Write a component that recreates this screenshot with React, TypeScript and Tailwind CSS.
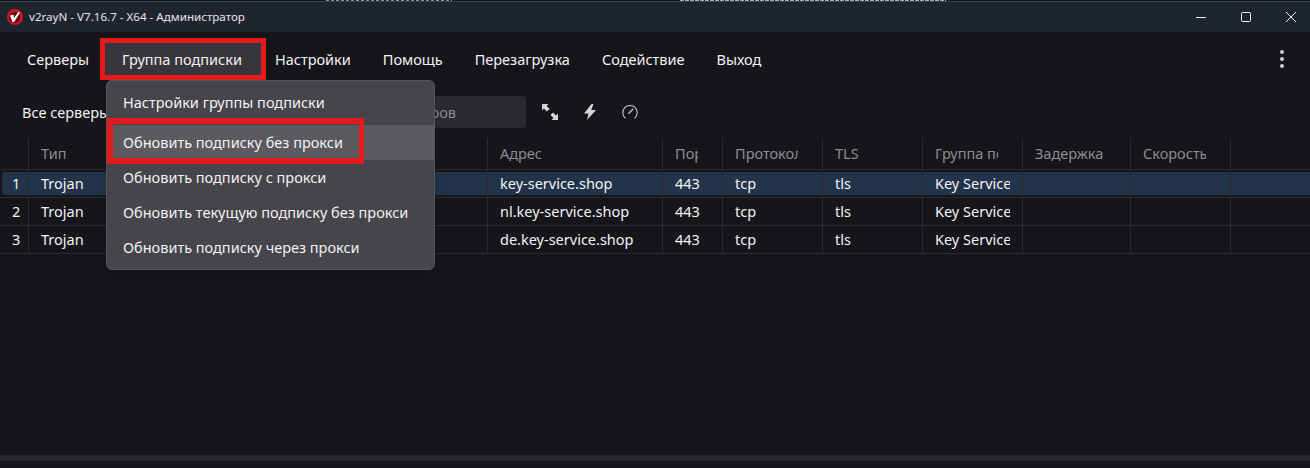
// App.tsx
import React from 'react';
import { EllipsisVertical } from 'lucide-react';

const menuItems = ['Серверы', 'Группа подписки', 'Настройки', 'Помощь', 'Перезагрузка', 'Содействие', 'Выход'];

const dropdownItems = [
  'Настройки группы подписки',
  'Обновить подписку без прокси',
  'Обновить подписку с прокси',
  'Обновить текущую подписку без прокси',
  'Обновить подписку через прокси',
];

const columns = [
  { label: '', width: 'w-[29px]' },
  { label: 'Тип', width: 'w-[100px]' },
  { label: '', width: 'w-[359px]' },
  { label: 'Адрес', width: 'w-[175px]' },
  { label: 'Порт', width: 'w-[60px]' },
  { label: 'Протокол', width: 'w-[100px]' },
  { label: 'TLS', width: 'w-[100px]' },
  { label: 'Группа подписки', width: 'w-[100px]' },
  { label: 'Задержка', width: 'w-[108px]' },
  { label: 'Скорость', width: 'w-[100px]' },
];

const rows = [
  ['1', 'Trojan', '', 'key-service.shop', '443', 'tcp', 'tls', 'Key Service', '', ''],
  ['2', 'Trojan', '', 'nl.key-service.shop', '443', 'tcp', 'tls', 'Key Service', '', ''],
  ['3', 'Trojan', '', 'de.key-service.shop', '443', 'tcp', 'tls', 'Key Service', '', ''],
];

const Logo = () => (
  <svg width="16" height="16" viewBox="0 0 16 16">
    <circle cx="8" cy="8" r="8" fill="#d3141b" />
    <circle cx="7.5" cy="8.5" r="5.5" fill="#5a0a0d" />
    <path d="M3 6.5 L6.6 5.6 L7 9 L11.5 2.8 L13 3.6 L7.2 13 L5.4 13 Z" fill="#fff" />
  </svg>
);

const App: React.FC = () => {
  return (
    <div className="w-[1310px] h-[468px] overflow-hidden bg-[#15151a] text-[#f2f2f2] font-['Noto_Sans',sans-serif] flex flex-col relative">
      {/* sliver of the window behind */}
      <div className="h-[1px] shrink-0 flex bg-[#14151a]">
        <div className="ml-[326px] w-[126px] bg-[repeating-linear-gradient(90deg,#8a8f9a_0_3px,transparent_3px_5px)]" />
        <div className="ml-[228px] w-[266px] bg-[repeating-linear-gradient(90deg,#a9adb6_0_4px,transparent_4px_5px)]" />
      </div>

      {/* title bar */}
      <div className="h-[31px] shrink-0 bg-[#1e252e] border-t border-[#3a4150] flex items-center pl-[7px] pr-[14px] text-[11.6px] text-[#e6e6e6]">
        <Logo />
        <span className="ml-[6px] flex-1">v2rayN - V7.16.7 - X64 - Администратор</span>
        <div className="flex items-center gap-[35px]">
          <svg width="10" height="10" viewBox="0 0 10 10" stroke="#f2f2f2" fill="none">
            <path d="M0 5.5H10" />
          </svg>
          <svg width="10" height="10" viewBox="0 0 10 10" stroke="#f2f2f2" fill="none">
            <rect x="0.5" y="0.5" width="9" height="9" rx="1" />
          </svg>
          <svg width="10" height="10" viewBox="0 0 10 10" stroke="#f2f2f2" fill="none">
            <path d="M0 0L10 10M10 0L0 10" />
          </svg>
        </div>
      </div>

      {/* menu */}
      <div className="h-[48px] mt-[3px] shrink-0 flex items-center pl-[11px] pr-[16px] text-[14.5px]">
        {menuItems.map((item) => (
          <div
            key={item}
            className={
              item === 'Группа подписки'
                ? 'h-[32px] pt-[2px] pl-[17px] pr-[19px] mr-[-2px] flex items-center bg-[#36363c] outline-[5px] outline-[#e21b1f]'
                : 'h-[32px] pt-[2px] px-[16px] flex items-center'
            }
          >
            {item}
          </div>
        ))}
        <div className="ml-auto flex items-center text-[#cfcfcf]"><EllipsisVertical size={24} /></div>
      </div>

      {/* toolbar */}
      <div className="h-[34px] mt-[12px] shrink-0 flex items-center pl-[22px] text-[14.5px]">
        <span className="w-[85px] pt-[2px] overflow-hidden whitespace-nowrap">Все серверы</span>
        <div className="ml-[2px] w-[417px] h-[32px] pt-[2px] bg-[#2a2a30] rounded-[4px] flex items-center justify-end pr-[70px] text-[#8b8b8f]">
          серверов
        </div>
        <svg className="ml-[16px]" width="16" height="16" viewBox="0 0 16 16" fill="#d5d5d5">
          <path d="M0 0h6.5L4.6 1.9 7.6 4.9 4.9 7.6 1.9 4.6 0 6.5zM16 16H9.5l1.9-1.9-3-3 2.7-2.7 3 3L16 9.5z" />
        </svg>
        <svg className="ml-[26px]" width="12" height="16" viewBox="0 0 12 16" fill="#d5d5d5">
          <path d="M7.5 0L0 9.5h4.5L3 16l9-10H7.2L9.5 0z" />
        </svg>
        <svg className="ml-[26px]" width="16" height="16" viewBox="0 0 16 16" fill="none" stroke="#c8c8c8" strokeWidth="1.1" strokeLinecap="round">
          <path d="M3.2 14A7.2 7.2 0 1 1 12.8 14" />
          <path d="M6.9 9.2L10.8 5.2" strokeWidth="1.4" />
        </svg>
      </div>

      {/* server table */}
      <div className="mt-[9px] text-[14.5px]">
        <div className="flex h-[32px] border-b border-[#2a2a2f]">
          {columns.map((col, i) => (
            <div key={i} className={`${col.width} shrink-0 h-full border-r border-[#2a2a2f] ${i === 0 ? '' : 'pl-[12px] pr-[24px]'} flex items-center text-[#8c8c90]`}>
              {col.label && <span className="block w-full overflow-hidden whitespace-nowrap">{col.label}</span>}
            </div>
          ))}
          <div className="flex-1" />
        </div>
        {rows.map((row, r) => (
          <div key={r} className="flex h-[28px] border-b border-[#2a2a2f] relative">
            {r === 0 && <div className="absolute left-[2px] right-0 top-[2px] h-[23px] bg-[#23344a] rounded-l-[3px]" />}
            {row.map((cell, i) => (
              <div key={i} className={`${columns[i].width} relative shrink-0 h-full border-r border-[#2a2a2f] ${i === 0 ? 'pl-[12px]' : 'pl-[12px] pr-[12px]'} flex items-center`}>
                {cell && <span className="block w-full overflow-hidden whitespace-nowrap">{cell}</span>}
              </div>
            ))}
          </div>
        ))}
      </div>

      {/* dropdown */}
      <div className="absolute left-[106px] top-[80px] w-[329px] h-[190px] bg-[#45454b] border border-[#55555b] rounded-[6px] shadow-lg text-[14.5px] py-[4px] flex flex-col">
        {dropdownItems.map((item, i) => (
          <div key={item} className={i === 1 ? 'h-[35px] mt-[5px] flex items-center pl-[16px] bg-[#5a5a60] relative' : 'h-[35px] flex items-center pl-[16px]'}>
            {item}
            {i === 1 && <div className="absolute left-0 top-[-7px] bottom-[-4px] w-[257px] border-[6px] border-r-[5px] border-[#e21b1f]" />}
          </div>
        ))}
      </div>

      {/* scrollbar */}
      <div className="absolute left-0 right-0 top-[455px] h-[6px] bg-[#27272d]" />
    </div>
  );
};

export default App;
